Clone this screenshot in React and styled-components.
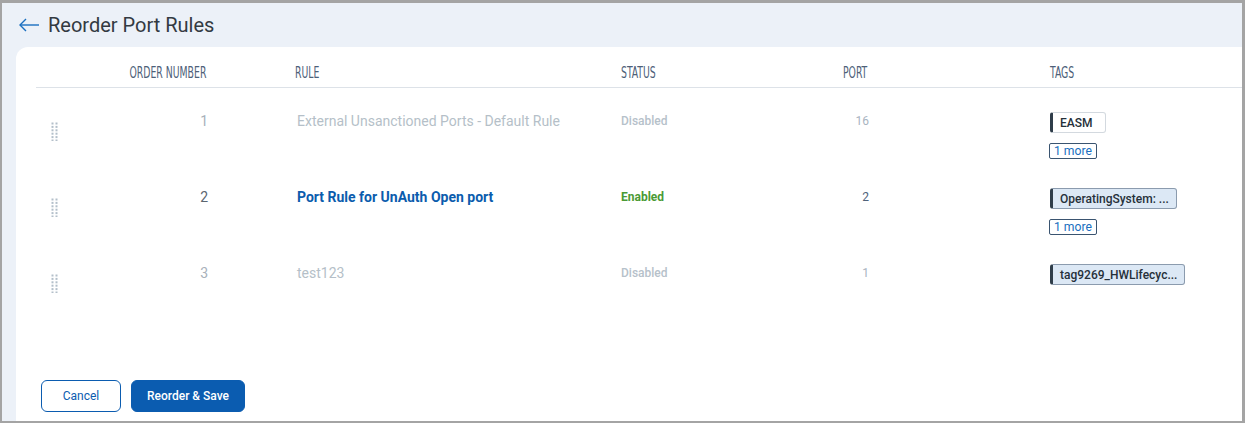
import React from "react";
import styled, { createGlobalStyle } from "styled-components";

const Global = createGlobalStyle`
  html, body { margin: 0; padding: 0; }
  body { font-family: Roboto, "Liberation Sans", sans-serif; background: #fff; }
  * { box-sizing: border-box; }
`;

const Frame = styled.div`
  width: 1245px;
  height: 423px;
  border-style: solid;
  border-color: #a4a4a4;
  border-width: 3px 3px 2px 2px;
  background: #ecf1f8;
  display: flex;
  flex-direction: column;
`;

const TitleBar = styled.div`
  height: 44px;
  display: flex;
  align-items: center;
  padding-left: 16px;
  gap: 8px;
`;

const BackButton = styled.button`
  border: none;
  background: none;
  padding: 0;
  display: flex;
  align-items: center;
  color: #1a6fc0;
  cursor: pointer;
`;

const Title = styled.h1`
  margin: 0;
  font-family: Roboto, sans-serif;
  font-weight: 400;
  font-size: 20px;
  color: #333a42;
`;

const Card = styled.div`
  flex: 1;
  margin-left: 14px;
  background: #fff;
  border-radius: 12px 0 0 0;
  display: flex;
  flex-direction: column;
  padding: 0 0 9px 0;
`;

const Table = styled.div`
  margin-left: 20px;
  display: flex;
  flex-direction: column;
`;

const Grid = styled.div`
  display: grid;
  grid-template-columns: 64px 110px 411px 120px 128px 1fr;
`;

const HeadRow = styled(Grid)`
  height: 41px;
  border-bottom: 1px solid #dde2e8;
  align-items: end;
  padding-bottom: 5px;
`;

const HeadCell = styled.div`
  display: flex;
  justify-content: ${(p) => (p.$right ? "flex-end" : "flex-start")};
  padding-left: ${(p) => p.$pl || 0}px;
  padding-right: ${(p) => p.$pr || 0}px;
`;

const HeadLabel = styled.span`
  flex: none;
  display: inline-block;
  font-family: "DejaVu Sans Condensed", "DejaVu Sans", sans-serif;
  font-stretch: condensed;
  font-size: 15px;
  font-weight: 500;
  color: #4d6078;
  text-transform: uppercase;
  line-height: 17px;
  white-space: nowrap;
  transform: scaleX(0.69);
  transform-origin: ${(p) => (p.$right ? "right" : "left")} center;
`;

const Row = styled(Grid)`
  height: 76px;
  padding-top: 24px;
  align-items: start;
`;

const Cell = styled.div`
  font-family: Roboto, sans-serif;
  line-height: 18px;
  text-align: ${(p) => (p.$right ? "right" : "left")};
  padding-left: ${(p) => p.$pl || 0}px;
  padding-right: ${(p) => p.$pr || 0}px;
`;

const HandleCell = styled.div`
  padding-left: 15px;
  padding-top: 10px;
`;

const Num = styled(Cell)`
  font-size: 14px;
  color: ${(p) => (p.$on ? "#5c6670" : "#a8b1ba")};
`;

const RuleName = styled(Cell)`
  font-size: 14px;
  font-weight: ${(p) => (p.$on ? 700 : 400)};
  color: ${(p) => (p.$on ? "#0b5cad" : "#b5bfc8")};
`;

const Status = styled(Cell)`
  font-size: 12px;
  font-weight: ${(p) => (p.$on ? 700 : 500)};
  color: ${(p) => (p.$on ? "#4a9a35" : "#b6c1ca")};
`;

const Port = styled(Cell)`
  font-size: 12px;
  color: ${(p) => (p.$on ? "#4f627a" : "#a9b4bf")};
`;

const TagsCell = styled.div`
  padding-left: 181px;
  display: flex;
  flex-direction: column;
  align-items: flex-start;
  gap: 10px;
`;

const Tag = styled.span`
  display: inline-flex;
  align-items: center;
  height: 21px;
  min-width: 56px;
  padding: 0 7px;
  border: 1px solid ${(p) => (p.$light ? "#d3d9df" : "#8b9bae")};
  border-left: 3px solid #2f3d4a;
  border-radius: 3px;
  background: ${(p) => (p.$light ? "#fff" : "#dce8f5")};
  font-family: Roboto, sans-serif;
  font-size: 12px;
  font-weight: 500;
  color: #26303a;
  white-space: nowrap;
`;

const More = styled.button`
  height: 16px;
  margin-left: -1px;
  padding: 0 4px;
  border: 1px solid #3a5470;
  border-radius: 2px;
  background: #fff;
  font-family: Roboto, sans-serif;
  font-size: 12.2px;
  color: #1a6fc0;
  line-height: 14px;
  cursor: pointer;
`;

const Spacer = styled.div`
  flex: 1;
`;

const Footer = styled.div`
  display: flex;
  gap: 10px;
  padding-left: 25px;
`;

const Button = styled.button`
  height: 32px;
  padding: 0 ${(p) => (p.$primary ? 14 : 20)}px;
  min-width: ${(p) => (p.$primary ? 114 : 80)}px;
  border-radius: 6px;
  border: 1px solid #0b5cb0;
  background: ${(p) => (p.$primary ? "#0b5cb0" : "#fff")};
  color: ${(p) => (p.$primary ? "#fff" : "#0b5cb0")};
  font-family: Roboto, sans-serif;
  font-size: 12px;
  font-weight: ${(p) => (p.$primary ? 500 : 400)};
  cursor: pointer;
`;

const DragHandle = () => (
  <svg width="8" height="19" viewBox="0 0 8 19">
    {[0, 1, 2, 3, 4, 5].map((r) =>
      [0, 4].map((c) => (
        <rect key={`${r}-${c}`} x={c + 0.5} y={r * 3.4 + 0.5} width="2" height="2" fill="#b3bfca" />
      ))
    )}
  </svg>
);

const ArrowLeft = () => (
  <svg width="22" height="14" viewBox="0 0 22 14" fill="none" stroke="currentColor" strokeWidth="1.4">
    <path d="M21 7H2" />
    <path d="M8 1L2 7l6 6" />
  </svg>
);

const rows = [
  { n: 1, name: "External Unsanctioned Ports - Default Rule", on: false, port: 16, tag: "EASM", light: true, more: true },
  { n: 2, name: "Port Rule for UnAuth Open port", on: true, port: 2, tag: "OperatingSystem: ...", light: false, more: true },
  { n: 3, name: "test123", on: false, port: 1, tag: "tag9269_HWLifecyc...", light: false, more: false },
];

export default function App() {
  return (
    <>
      <Global />
      <Frame>
        <TitleBar>
          <BackButton aria-label="Back">
            <ArrowLeft />
          </BackButton>
          <Title>Reorder Port Rules</Title>
        </TitleBar>
        <Card>
          <Table>
            <HeadRow>
              <HeadCell />
              <HeadCell $right $pr={4}><HeadLabel $right>Order Number</HeadLabel></HeadCell>
              <HeadCell $pl={85}><HeadLabel>Rule</HeadLabel></HeadCell>
              <HeadCell><HeadLabel>Status</HeadLabel></HeadCell>
              <HeadCell $right $pr={2}><HeadLabel $right>Port</HeadLabel></HeadCell>
              <HeadCell $pl={181}><HeadLabel>Tags</HeadLabel></HeadCell>
            </HeadRow>
            {rows.map((r) => (
              <Row key={r.n}>
                <HandleCell>
                  <DragHandle />
                </HandleCell>
                <Num $right $pr={2} $on={r.on}>{r.n}</Num>
                <RuleName $pl={87} $on={r.on}>{r.name}</RuleName>
                <Status $on={r.on}>{r.on ? "Enabled" : "Disabled"}</Status>
                <Port $right $on={r.on}>{r.port}</Port>
                <TagsCell>
                  <Tag $light={r.light}>{r.tag}</Tag>
                  {r.more && <More>1 more</More>}
                </TagsCell>
              </Row>
            ))}
          </Table>
          <Spacer />
          <Footer>
            <Button>Cancel</Button>
            <Button $primary>Reorder &amp; Save</Button>
          </Footer>
        </Card>
      </Frame>
    </>
  );
}
